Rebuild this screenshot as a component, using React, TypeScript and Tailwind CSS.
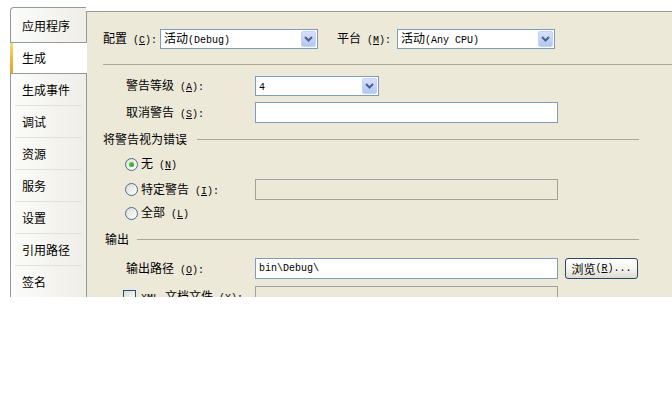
import type { ReactNode } from 'react';

const tabs = ['应用程序', '生成', '生成事件', '调试', '资源', '服务', '设置', '引用路径', '签名'];
const activeTab = 1;

// latin bits are rendered in a narrow mono face, like the dialog font
function L({ children }: { children: ReactNode }) {
  return <span className="font-['Liberation_Mono',monospace] text-[10px]">{children}</span>;
}

function Key({ k, colon = true }: { k: string; colon?: boolean }) {
  return (
    <L>
      {' ('}
      <span className="underline">{k}</span>
      {colon ? '):' : ')'}
    </L>
  );
}

function Chevron() {
  return (
    <svg width="9" height="6" viewBox="0 0 9 6">
      <path d="M1 1 L4.5 4.5 L8 1" fill="none" stroke="#4d6185" strokeWidth="2" />
    </svg>
  );
}

function Select({ className, children }: { className: string; children: ReactNode }) {
  return (
    <div className={`flex h-[20px] items-center border border-[#7f9db9] bg-white pl-[3px] pr-px ${className}`}>
      <span className="flex-1 whitespace-nowrap leading-[16px]">{children}</span>
      <span className="flex h-[16px] w-[15px] items-center justify-center rounded-[2px] border border-[#c3d3fd] bg-gradient-to-b from-[#d5e1fc] to-[#b3c7f5]">
        <Chevron />
      </span>
    </div>
  );
}

function TextBox({ value, disabled }: { value?: string; disabled?: boolean }) {
  return (
    <div
      className={`flex h-[21px] w-[303px] items-center border px-[3px] ${
        disabled ? 'border-[#a3a29a] bg-[#ece9d8]' : 'border-[#7f9db9] bg-white'
      }`}
    >
      {value && <L>{value}</L>}
    </div>
  );
}

function Radio({ checked }: { checked?: boolean }) {
  return (
    <span className="flex h-[13px] w-[13px] items-center justify-center rounded-full border border-[#4a6d8f] bg-gradient-to-br from-[#dedcd3] to-white">
      {checked && <span className="h-[5px] w-[5px] rounded-full bg-gradient-to-br from-[#55d155] to-[#1f9a1f]" />}
    </span>
  );
}

function GroupHeader({ title, gap }: { title: string; gap: string }) {
  return (
    <div className={`mt-[9px] flex h-[14px] items-center ${gap}`}>
      <span>{title}</span>
      <span className="mr-[33px] h-px flex-1 bg-[#aca899]" />
    </div>
  );
}

export default function App() {
  return (
    <div className="min-h-screen bg-white font-['Noto_Sans_CJK_SC','Noto_Sans',sans-serif] text-[12px] leading-none text-black">
      <div className="flex h-[297px] overflow-hidden pl-[10px]">
        {/* page list */}
        <aside className="relative z-10 mt-[7px] w-[76px] rounded-tl-[4px] border-l border-t border-[#919b9c] bg-gradient-to-r from-[#fcfcfa] to-[#efeee7] pt-[2px]">
          {tabs.map((t, i) =>
            i === activeTab ? (
              <div key={t} className="-ml-px -mr-px flex h-[32px] border-y border-[#919b9c] bg-white">
                <span className="w-[3px] bg-gradient-to-b from-[#fbd77a] via-[#f2b83c] to-[#e6a129]" />
                <span className="flex items-center pl-[9px]">{t}</span>
              </div>
            ) : (
              <div key={t} className="flex h-[32px] flex-col">
                <span className="flex flex-1 items-center pl-[11px]">{t}</span>
                <span className={`mx-[4px] h-px ${i === activeTab - 1 ? 'bg-transparent' : 'bg-[#e2e1d9]'}`} />
              </div>
            )
          )}
        </aside>

        {/* build page */}
        <main className="mt-[11px] flex-1 border-l border-t border-[#919b9c] bg-[#ece9d8] pt-[17px]">
          <div className="flex h-[20px] items-center pl-[16px]">
            <span className="w-[57px]">
              配置<Key k="C" />
            </span>
            <Select className="w-[158px]">
              活动<L>(Debug)</L>
            </Select>
            <span className="ml-[19px] w-[60px]">
              平台<Key k="M" />
            </span>
            <Select className="w-[158px]">
              活动<L>(Any CPU)</L>
            </Select>
          </div>

          <div className="ml-[16px] mt-[15px] h-px bg-[#aca899]" />

          <div className="mt-[11px] flex h-[20px] items-center pl-[39px]">
            <span className="w-[129px]">
              警告等级<Key k="A" />
            </span>
            <Select className="w-[124px]">
              <L>4</L>
            </Select>
          </div>

          <div className="mt-[6px] flex h-[21px] items-center pl-[39px]">
            <span className="w-[129px]">
              取消警告<Key k="S" />
            </span>
            <TextBox />
          </div>

          <GroupHeader title="将警告视为错误" gap="gap-[10px] pl-[16px]" />

          <div className="mt-[8px] flex h-[20px] items-center gap-[3px] pl-[38px]">
            <Radio checked />
            <span>
              无<Key k="N" colon={false} />
            </span>
          </div>

          <div className="mt-[5px] flex h-[21px] items-center pl-[38px]">
            <span className="flex w-[130px] items-center gap-[3px]">
              <Radio />
              <span>
                特定警告<Key k="I" />
              </span>
            </span>
            <TextBox disabled />
          </div>

          <div className="mt-[3px] flex h-[20px] items-center gap-[3px] pl-[38px]">
            <Radio />
            <span>
              全部<Key k="L" colon={false} />
            </span>
          </div>

          <GroupHeader title="输出" gap="gap-[8px] pl-[18px]" />

          <div className="mt-[12px] flex h-[21px] items-center pl-[39px]">
            <span className="w-[129px]">
              输出路径<Key k="O" />
            </span>
            <TextBox value="bin\Debug\" />
            <button className="ml-[7px] flex h-[21px] w-[73px] items-center justify-center rounded-[3px] border border-[#29476b] bg-gradient-to-b from-white via-[#f5f4ef] to-[#dedcd1]">
              浏览<Key k="R" colon={false} />
              <L>...</L>
            </button>
          </div>

          <div className="mt-[7px] flex h-[21px] items-center pl-[36px]">
            <span className="flex w-[132px] items-center gap-[5px]">
              <span className="h-[13px] w-[13px] border border-[#1c5180] bg-gradient-to-br from-[#dedcd3] to-white" />
              <span>
                <L>XML </L>文档文件<Key k="X" />
              </span>
            </span>
            <TextBox disabled />
          </div>
        </main>
      </div>
    </div>
  );
}
